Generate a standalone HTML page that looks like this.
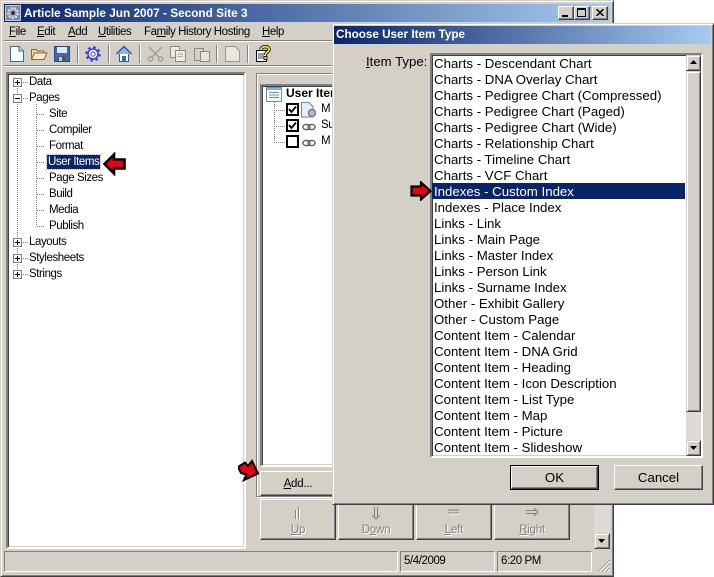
<!DOCTYPE html>
<html><head><meta charset="utf-8"><style>
html,body{margin:0;padding:0;background:#fff}
body{width:714px;height:577px;overflow:hidden;position:relative;font-family:"Liberation Sans",sans-serif;font-size:12px;color:#000}
div,span.a,svg{position:absolute}
.t{white-space:nowrap;line-height:16px}
.n{font-size:11.5px;letter-spacing:-.42px}
.sunk{box-sizing:border-box;border:2px solid;border-color:#808080 #fff #fff #808080;background:#fff;box-shadow:inset 1px 1px 0 #404040,inset -1px -1px 0 #d4d0c8}
.st{box-sizing:border-box;border:1px solid;border-color:#808080 #fff #fff #808080}
.btn{box-sizing:border-box;background:#d4d0c8;border:1px solid;border-color:#fff #404040 #404040 #fff;box-shadow:inset -1px -1px 0 #808080;text-align:center}
.dis{color:#808080;text-shadow:1px 1px 0 #fff;font-size:11.5px;letter-spacing:-.2px}
.box{box-sizing:border-box;width:13px;height:13px;border:2px solid #000;background:#fff}
.pm{box-sizing:border-box;width:9px;height:9px;border:1px solid #808080;background:#fff}
.pm:before{content:"";position:absolute;left:1px;top:3px;width:5px;height:1px;background:#000}
.pm.p:after{content:"";position:absolute;left:3px;top:1px;width:1px;height:5px;background:#000}
.dh{height:1px;background-image:linear-gradient(90deg,#808080 50%,transparent 50%);background-size:2px 1px}
.dv{width:1px;background-image:linear-gradient(#808080 50%,transparent 50%);background-size:1px 2px}
u{text-decoration:underline}
.li{left:2px;white-space:nowrap;font-size:13.25px;line-height:16px;height:16px}
.sb{box-sizing:border-box;background:#d4d0c8;border:1px solid;border-color:#d4d0c8 #404040 #404040 #d4d0c8;box-shadow:inset 1px 1px 0 #fff,inset -1px -1px 0 #808080}
.dither{background-color:#e8e6e2;background-image:linear-gradient(45deg,#d4d0c8 25%,transparent 25%,transparent 75%,#d4d0c8 75%),linear-gradient(45deg,#d4d0c8 25%,transparent 25%,transparent 75%,#d4d0c8 75%);background-size:2px 2px;background-position:0 0,1px 1px}
.m{top:24px;font-size:11.5px;line-height:16px;white-space:nowrap;letter-spacing:-.42px}
.sep{top:45px;width:2px;height:18px;border-left:1px solid #808080;border-right:1px solid #fff;box-sizing:border-box}
</style></head><body>

<!-- main window -->
<div style="left:0;top:0;width:614px;height:577px;box-sizing:border-box;background:#d4d0c8;border:1px solid;border-color:#d4d0c8 #404040 #404040 #d4d0c8;box-shadow:inset 1px 1px 0 #fff,inset -1px -1px 0 #808080"></div>
<div style="left:4px;top:4px;width:606px;height:18px;background:linear-gradient(90deg,#0a246a,#a6caf0)"></div>
<svg style="left:5px;top:5px" width="16" height="16" viewBox="0 0 16 16"><rect x=".5" y=".5" width="15" height="15" fill="#7b86a8" stroke="#c8c8d8"/><circle cx="8" cy="8" r="5" fill="#aab" stroke="#dde" stroke-width="2" stroke-dasharray="2 1.5"/><circle cx="8" cy="8" r="2" fill="#334"/></svg>
<div class="t" style="left:24px;top:5px;color:#fff;font-weight:bold;font-size:11.8px">Article Sample Jun 2007 - Second Site 3</div>
<!-- caption buttons -->
<div class="btn" style="left:558px;top:6px;width:16px;height:14px"></div><div style="left:562px;top:15px;width:6px;height:2px;background:#000"></div>
<div class="btn" style="left:574px;top:6px;width:16px;height:14px"></div><div style="left:577px;top:8px;width:9px;height:9px;box-sizing:border-box;border:1px solid #000;border-top-width:2px"></div>
<div class="btn" style="left:592px;top:6px;width:16px;height:14px"></div>
<svg style="left:596px;top:9px" width="8" height="7" viewBox="0 0 8 7"><path d="M.5 0L7.500 7M7.500 0L.5 7" stroke="#000" stroke-width="1.500"/></svg>

<!-- menu -->
<div class="m" style="left:9px"><u>F</u>ile</div>
<div class="m" style="left:37px"><u>E</u>dit</div>
<div class="m" style="left:68px"><u>A</u>dd</div>
<div class="m" style="left:98px"><u>U</u>tilities</div>
<div class="m" style="left:144px">Fa<u>m</u>ily History Hosting</div>
<div class="m" style="left:262px"><u>H</u>elp</div>
<div style="left:4px;top:41px;width:606px;height:1px;background:#fff"></div>
<div style="left:4px;top:40px;width:606px;height:1px;background:#808080"></div>
<div style="left:4px;top:65px;width:606px;height:1px;background:#808080"></div>
<div style="left:4px;top:66px;width:606px;height:1px;background:#fff"></div>

<!-- toolbar icons -->
<svg style="left:9px;top:45px" width="16" height="18" viewBox="0 0 16 18"><path d="M1.500 1.500H10L14.500 6V16.500H1.500Z" fill="#fff" stroke="#2a6ab0"/><path d="M10 1.500V6H14.500" fill="#bcd8f4" stroke="#2a6ab0"/></svg>
<svg style="left:30px;top:46px" width="18" height="16" viewBox="0 0 18 16"><path d="M1.500 13.500V3.500H6L7.500 5H14V7" fill="#e8d8a8" stroke="#8a6a30"/><path d="M1.500 13.500L4.500 7H17L14 13.500Z" fill="#f8ecc8" stroke="#8a6a30"/></svg>
<svg style="left:54px;top:46px" width="16" height="16" viewBox="0 0 16 16"><rect x=".5" y=".5" width="15" height="15" fill="#3e6aa8" stroke="#244a80"/><rect x="3" y="1" width="10" height="6" fill="#dde8f4"/><rect x="4" y="10" width="8" height="5" fill="#555"/><rect x="5" y="11" width="3" height="4" fill="#ccc"/></svg>
<div class="sep" style="left:77px"></div>
<svg style="left:85px;top:46px" width="16" height="16" viewBox="0 0 16 16"><circle cx="8" cy="8" r="5" fill="#fff" stroke="#3a3ae8" stroke-width="1.500"/><circle cx="8" cy="8" r="2.200" fill="#fff" stroke="#3a3ae8"/><circle cx="8" cy="8" r="6.700" fill="none" stroke="#3a3ae8" stroke-width="2" stroke-dasharray="2.500 2.760"/></svg>
<div class="sep" style="left:108px"></div>
<svg style="left:116px;top:45px" width="16" height="17" viewBox="0 0 16 17"><path d="M3.500 8V16.500H12.500V8" fill="#fff" stroke="#2a5a90"/><path d="M.5 9L8 1.500L15.500 9" fill="#8ab8e0" stroke="#2a5a90" stroke-width="1.400"/><rect x="6" y="11" width="4" height="5.500" fill="#3a6a9a"/></svg>
<div class="sep" style="left:139px"></div>
<svg style="left:147px;top:46px" width="17" height="16" viewBox="0 0 17 16" fill="none" stroke="#9c9a94" stroke-width="1.300"><path d="M2 1L12 11M15 1L5 11"/><circle cx="3.500" cy="13" r="2.200"/><circle cx="13.500" cy="13" r="2.200"/></svg>
<svg style="left:170px;top:46px" width="16" height="16" viewBox="0 0 16 16" fill="#eeece8" stroke="#8a8880"><rect x=".5" y=".5" width="9" height="11"/><rect x="5.500" y="4.500" width="10" height="11"/><path d="M7.500 8H13M7.500 10.500H13" stroke="#aaa"/></svg>
<svg style="left:193px;top:46px" width="17" height="16" viewBox="0 0 17 16" fill="#d4d0c8" stroke="#8a8880"><rect x="1.500" y="2.500" width="9" height="12"/><rect x="7.500" y="5.500" width="9" height="10" fill="#e4e2dc"/></svg>
<div class="sep" style="left:216px"></div>
<svg style="left:225px;top:46px" width="15" height="16" viewBox="0 0 15 16"><path d="M.5 .5H10L14.500 5V15.500H.5Z" fill="#e8e6e0" stroke="#98968e"/></svg>
<div class="sep" style="left:247px"></div>
<svg style="left:255px;top:45px" width="16" height="18" viewBox="0 0 16 18"><rect x="1.500" y="5.500" width="10" height="11" fill="#fff" stroke="#000"/><path d="M3 9H9M3 11H9M3 13H9" stroke="#444"/><path d="M6 4.500C6 1 14 .5 14 4.500C14 7 10.500 7 10.500 10" fill="none" stroke="#000" stroke-width="3.400"/><path d="M6 4.500C6 1 14 .5 14 4.500C14 7 10.500 7 10.500 10" fill="none" stroke="#ffe020" stroke-width="1.800"/><rect x="9" y="11.500" width="3" height="3" fill="#ffe020" stroke="#000" stroke-width=".8"/></svg>

<!-- tree -->
<div class="sunk" style="left:6px;top:72px;width:240px;height:477px"></div>
<div class="dv" style="left:17px;top:86px;height:184px"></div>
<div class="dv" style="left:36px;top:104px;height:122px"></div>
<div class="pm p" style="left:13px;top:78px"></div>
<div class="pm" style="left:13px;top:94px"></div>
<div class="pm p" style="left:13px;top:238px"></div>
<div class="pm p" style="left:13px;top:254px"></div>
<div class="pm p" style="left:13px;top:270px"></div>
<div class="dh" style="left:23px;top:82px;width:5px"></div>
<div class="dh" style="left:23px;top:98px;width:5px"></div>
<div class="dh" style="left:23px;top:242px;width:5px"></div>
<div class="dh" style="left:23px;top:258px;width:5px"></div>
<div class="dh" style="left:23px;top:274px;width:5px"></div>
<div class="dh" style="left:37px;top:114px;width:8px"></div>
<div class="dh" style="left:37px;top:130px;width:8px"></div>
<div class="dh" style="left:37px;top:146px;width:8px"></div>
<div class="dh" style="left:37px;top:162px;width:8px"></div>
<div class="dh" style="left:37px;top:178px;width:8px"></div>
<div class="dh" style="left:37px;top:194px;width:8px"></div>
<div class="dh" style="left:37px;top:210px;width:8px"></div>
<div class="dh" style="left:37px;top:226px;width:8px"></div>
<div class="t n" style="left:29px;top:74px">Data</div>
<div class="t n" style="left:29px;top:90px">Pages</div>
<div class="t n" style="left:49px;top:106px">Site</div>
<div class="t n" style="left:49px;top:122px">Compiler</div>
<div class="t n" style="left:49px;top:138px">Format</div>
<div style="left:47px;top:155px;width:53px;height:14px;background:#0a246a;outline:1px dotted #d8b060"></div>
<div class="t n" style="left:48px;top:154px;color:#fff">User Items</div>
<div class="t n" style="left:49px;top:170px">Page Sizes</div>
<div class="t n" style="left:49px;top:186px">Build</div>
<div class="t n" style="left:49px;top:202px">Media</div>
<div class="t n" style="left:49px;top:218px">Publish</div>
<div class="t n" style="left:29px;top:234px">Layouts</div>
<div class="t n" style="left:29px;top:250px">Stylesheets</div>
<div class="t n" style="left:29px;top:266px">Strings</div>
<svg style="left:103px;top:152px" width="23" height="24" viewBox="0 0 23 24"><path d="M1.500 12L11 2.500V7.500H21.500V16.500H11V21.500Z" fill="#e80010" stroke="#000" stroke-width="2.600"/></svg>

<!-- right panel -->
<div style="left:256px;top:73px;width:340px;height:424px;box-sizing:border-box;border:1px solid #808080;box-shadow:inset 1px 1px 0 #fff,1px 1px 0 #fff"></div>
<div class="sunk" style="left:260px;top:84px;width:330px;height:383px"></div>
<svg style="left:266px;top:87px" width="16" height="15" viewBox="0 0 16 15"><rect x=".5" y=".5" width="15" height="14" fill="#fff" stroke="#6a8cc8"/><rect x="1" y="1" width="14" height="2" fill="#8ab0e0"/><path d="M3 5.500H13M3 8H13M3 10.500H13" stroke="#6a8cc8"/></svg>
<div class="t" style="left:286px;top:85px;font-weight:bold;font-size:12px">User Items</div>
<div class="dv" style="left:274px;top:102px;height:40px"></div>
<div class="dh" style="left:274px;top:110px;width:12px"></div>
<div class="dh" style="left:274px;top:126px;width:12px"></div>
<div class="dh" style="left:274px;top:142px;width:12px"></div>
<div class="box" style="left:286px;top:103px"></div>
<div class="box" style="left:286px;top:119px"></div>
<div class="box" style="left:286px;top:135px"></div>
<svg style="left:288px;top:105px" width="9" height="9" viewBox="0 0 9 9"><path d="M1 4L3.500 7L8 1.500" fill="none" stroke="#000" stroke-width="1.800"/></svg>
<svg style="left:288px;top:121px" width="9" height="9" viewBox="0 0 9 9"><path d="M1 4L3.500 7L8 1.500" fill="none" stroke="#000" stroke-width="1.800"/></svg>
<svg style="left:301px;top:102px" width="16" height="16" viewBox="0 0 16 16"><path d="M.5 .5H8L12 4.500V15H.5Z" fill="#e4eef8" stroke="#5a88c0"/><circle cx="11" cy="11" r="3.500" fill="#bbb" stroke="#778" stroke-width="1.500"/></svg>
<svg style="left:302px;top:123px" width="14" height="8" viewBox="0 0 14 8" fill="none" stroke="#666" stroke-width="1.500"><rect x="1" y="1.500" width="7" height="5" rx="2.500"/><rect x="6" y="1.500" width="7" height="5" rx="2.500"/></svg>
<svg style="left:302px;top:139px" width="14" height="8" viewBox="0 0 14 8" fill="none" stroke="#666" stroke-width="1.500"><rect x="1" y="1.500" width="7" height="5" rx="2.500"/><rect x="6" y="1.500" width="7" height="5" rx="2.500"/></svg>
<div class="t n" style="left:321px;top:101px">M</div>
<div class="t n" style="left:321px;top:117px">Su</div>
<div class="t n" style="left:321px;top:133px">M</div>

<div class="btn" style="left:260px;top:471px;width:76px;height:25px;line-height:24px;font-size:11.5px;letter-spacing:-.2px"><u>A</u>dd...</div>
<div class="btn" style="left:260px;top:499px;width:76px;height:41px"></div>
<div class="btn" style="left:338px;top:499px;width:76px;height:41px"></div>
<div class="btn" style="left:416px;top:499px;width:76px;height:41px"></div>
<div class="btn" style="left:494px;top:499px;width:76px;height:41px"></div>
<svg style="left:238px;top:459px" width="22" height="23" viewBox="238 459 22 23"><path d="M238 467L245 462.500L248 466L252 461L258 473.500L244 480L246.500 474.500L241 473Z" fill="#e80010" stroke="#000" stroke-width="2" stroke-linejoin="miter"/></svg>
<svg style="left:290px;top:506px" width="14" height="14" viewBox="0 0 14 14" fill="none" stroke="#808080"><path d="M5.500 13V4M8.500 13V1" /><path d="M6.500 13V4M9.500 13V2" stroke="#fff"/></svg>
<svg style="left:369px;top:506px" width="14" height="14" viewBox="0 0 14 14" fill="none" stroke="#808080"><path d="M5.500 1V11M8.500 1V11M3 9L7 13L11 9"/></svg>
<svg style="left:447px;top:507px" width="14" height="10" viewBox="0 0 14 10" fill="none" stroke="#808080"><path d="M1 3H12M1 6H12"/><path d="M2 7H13" stroke="#fff"/></svg>
<svg style="left:525px;top:507px" width="15" height="10" viewBox="0 0 15 10" fill="none" stroke="#808080"><path d="M1 3.500H11M1 6.500H11M9 1L13 5L9 9"/></svg>
<div class="t dis" style="left:260px;top:522px;width:76px;text-align:center"><u>U</u>p</div>
<div class="t dis" style="left:338px;top:522px;width:76px;text-align:center">D<u>o</u>wn</div>
<div class="t dis" style="left:416px;top:522px;width:76px;text-align:center"><u>L</u>eft</div>
<div class="t dis" style="left:494px;top:522px;width:76px;text-align:center"><u>R</u>ight</div>

<!-- main scrollbar -->
<div class="dither" style="left:594px;top:490px;width:16px;height:44px"></div>
<div class="sb" style="left:594px;top:533px;width:16px;height:16px"></div>
<svg style="left:598px;top:539px" width="8" height="5"><path d="M0 0H7L3.500 4Z" fill="#000"/></svg>

<!-- status -->
<div class="st" style="left:4px;top:551px;width:394px;height:21px"></div>
<div class="st" style="left:400px;top:551px;width:95px;height:21px"></div>
<div class="st" style="left:497px;top:551px;width:95px;height:21px"></div>
<div class="t n" style="left:404px;top:553px">5/4/2009</div>
<div class="t n" style="left:501px;top:553px">6:20 PM</div>
<svg style="left:597px;top:559px" width="14" height="14" viewBox="0 0 14 14" fill="none" stroke="#808080"><path d="M1 13L13 1M5 13L13 5M9 13L13 9"/><path d="M2 13L13 2M6 13L13 6M10 13L13 10" stroke="#fff"/></svg>

<!-- dialog -->
<div style="left:332px;top:23px;width:382px;height:482px;box-sizing:border-box;background:#d4d0c8;border:1px solid;border-color:#d4d0c8 #404040 #404040 #d4d0c8;box-shadow:inset 1px 1px 0 #fff,inset -1px -1px 0 #808080"></div>
<div style="left:334px;top:26px;width:377px;height:18px;background:linear-gradient(90deg,#0a246a,#a6caf0)"></div>
<div class="t" style="left:336px;top:27px;color:#fff;font-weight:bold;font-size:11.7px">Choose User Item Type</div>
<div class="t" style="left:366px;top:54px;font-size:13.2px"><u>I</u>tem Type:</div>
<div class="sunk" style="left:430px;top:53px;width:273px;height:405px;overflow:hidden">
<div class="li" style="top:1px">Charts - Descendant Chart</div>
<div class="li" style="top:17px">Charts - DNA Overlay Chart</div>
<div class="li" style="top:33px">Charts - Pedigree Chart (Compressed)</div>
<div class="li" style="top:49px">Charts - Pedigree Chart (Paged)</div>
<div class="li" style="top:65px">Charts - Pedigree Chart (Wide)</div>
<div class="li" style="top:81px">Charts - Relationship Chart</div>
<div class="li" style="top:97px">Charts - Timeline Chart</div>
<div class="li" style="top:113px">Charts - VCF Chart</div>
<div style="left:0;top:128px;width:253px;height:16px;background:#0a246a"></div>
<div class="li" style="top:129px;color:#fff">Indexes - Custom Index</div>
<div class="li" style="top:145px">Indexes - Place Index</div>
<div class="li" style="top:161px">Links - Link</div>
<div class="li" style="top:177px">Links - Main Page</div>
<div class="li" style="top:193px">Links - Master Index</div>
<div class="li" style="top:209px">Links - Person Link</div>
<div class="li" style="top:225px">Links - Surname Index</div>
<div class="li" style="top:241px">Other - Exhibit Gallery</div>
<div class="li" style="top:257px">Other - Custom Page</div>
<div class="li" style="top:273px">Content Item - Calendar</div>
<div class="li" style="top:289px">Content Item - DNA Grid</div>
<div class="li" style="top:305px">Content Item - Heading</div>
<div class="li" style="top:321px">Content Item - Icon Description</div>
<div class="li" style="top:337px">Content Item - List Type</div>
<div class="li" style="top:353px">Content Item - Map</div>
<div class="li" style="top:369px">Content Item - Picture</div>
<div class="li" style="top:385px">Content Item - Slideshow</div>
</div>
<div class="dither" style="left:686px;top:55px;width:15px;height:401px"></div>
<div class="sb" style="left:686px;top:55px;width:15px;height:16px"></div>
<svg style="left:690px;top:60px" width="8" height="5"><path d="M0 4H7L3.500 0Z" fill="#000"/></svg>
<div class="sb" style="left:686px;top:71px;width:15px;height:341px"></div>
<div class="sb" style="left:686px;top:440px;width:15px;height:16px"></div>
<svg style="left:690px;top:446px" width="8" height="5"><path d="M0 0H7L3.500 4Z" fill="#000"/></svg>
<svg style="left:410px;top:181px" width="22" height="20" viewBox="0 0 22 20"><path d="M1.500 5.500H11V1.500L20.500 10L11 18.500V14.500H1.500Z" fill="#e80010" stroke="#000" stroke-width="2.200"/></svg>

<div style="left:510px;top:465px;width:89px;height:25px;box-sizing:border-box;border:1px solid #000"></div>
<div class="btn" style="left:511px;top:466px;width:87px;height:23px;line-height:22px;font-size:13.25px">OK</div>
<div class="btn" style="left:614px;top:465px;width:89px;height:25px;line-height:24px;font-size:13.25px">Cancel</div>
</body></html>
